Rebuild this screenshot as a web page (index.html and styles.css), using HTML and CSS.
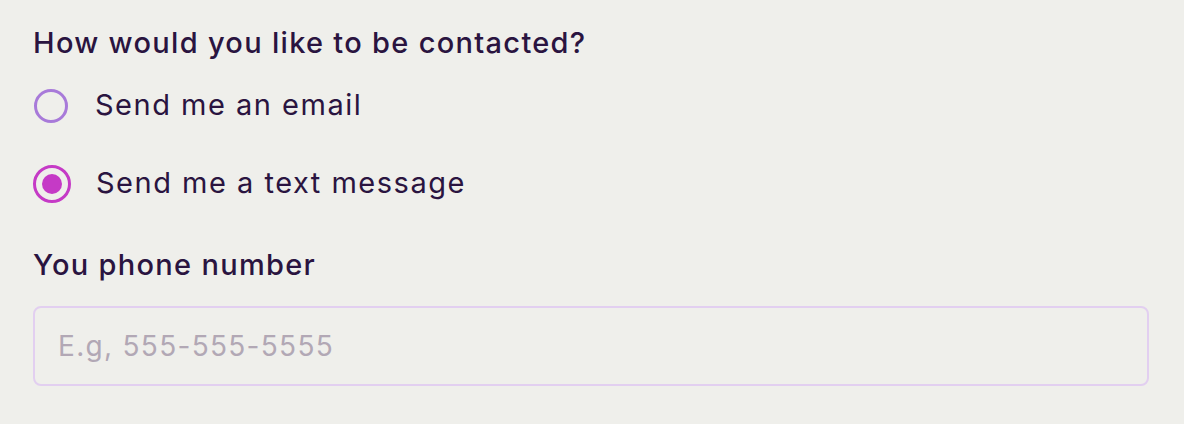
FILE: index.html
```html
<!DOCTYPE html>
<html>
<head>
<meta charset="utf-8">
<link rel="stylesheet" href="styles.css">
</head>
<body>
<form class="form">
  <fieldset class="group">
    <legend class="title">How would you like to be contacted?</legend>
    <label class="option">
      <span class="radio"></span>
      <span class="option-text">Send me an email</span>
    </label>
    <label class="option">
      <span class="radio radio-checked"><span class="dot"></span></span>
      <span class="option-text">Send me a text message</span>
    </label>
  </fieldset>
  <div class="field">
    <div class="title">You phone number</div>
    <div class="input"><span class="placeholder">E.g, 555-555-5555</span></div>
  </div>
</form>
</body>
</html>
```
FILE: styles.css
```css
html, body {
  margin: 0;
  padding: 0;
  background: #efefeb;
}
body {
  font-family: Inter, "Noto Sans", sans-serif;
  color: #2a1440;
  width: 1184px;
  height: 424px;
  overflow: hidden;
}
.form {
  padding: 26px 35px 0 33px;
  display: flex;
  flex-direction: column;
}
.group {
  border: 0;
  margin: 0;
  padding: 0;
  display: flex;
  flex-direction: column;
}
.title {
  font-size: 29px;
  font-weight: 550;
  line-height: 34px;
  padding: 0;
  letter-spacing: 1.3px;
}
.option {
  display: flex;
  align-items: center;
  gap: 25px;
  height: 40px;
}
.group .title + .option {
  margin-top: 26px;
}
.option + .option {
  margin-top: 38px;
}
.radio {
  width: 34px;
  height: 34px;
  border: 3px solid #a87ad9;
  border-radius: 50%;
  box-sizing: border-box;
  margin-left: 1px;
  margin-right: 2px;
  display: flex;
  align-items: center;
  justify-content: center;
  flex: none;
}
.radio-checked {
  width: 38px;
  height: 38px;
  margin-left: 0;
  margin-right: 0;
  border-color: #c53ac6;
}
.dot {
  width: 20px;
  height: 20px;
  border-radius: 50%;
  background: #c53ac6;
}
.option-text {
  font-size: 29px;
  font-weight: 400;
  letter-spacing: 1.5px;
  position: relative;
  top: -2px;
}
.field {
  margin-top: 44px;
  display: flex;
  flex-direction: column;
}
.input {
  margin-top: 24px;
  height: 80px;
  box-sizing: border-box;
  border: 2px solid #e2cff0;
  border-radius: 8px;
  display: flex;
  align-items: center;
  padding-left: 23px;
}
.placeholder {
  font-size: 28px;
  color: #b2a8b5;
  letter-spacing: 1.3px;
}
```
